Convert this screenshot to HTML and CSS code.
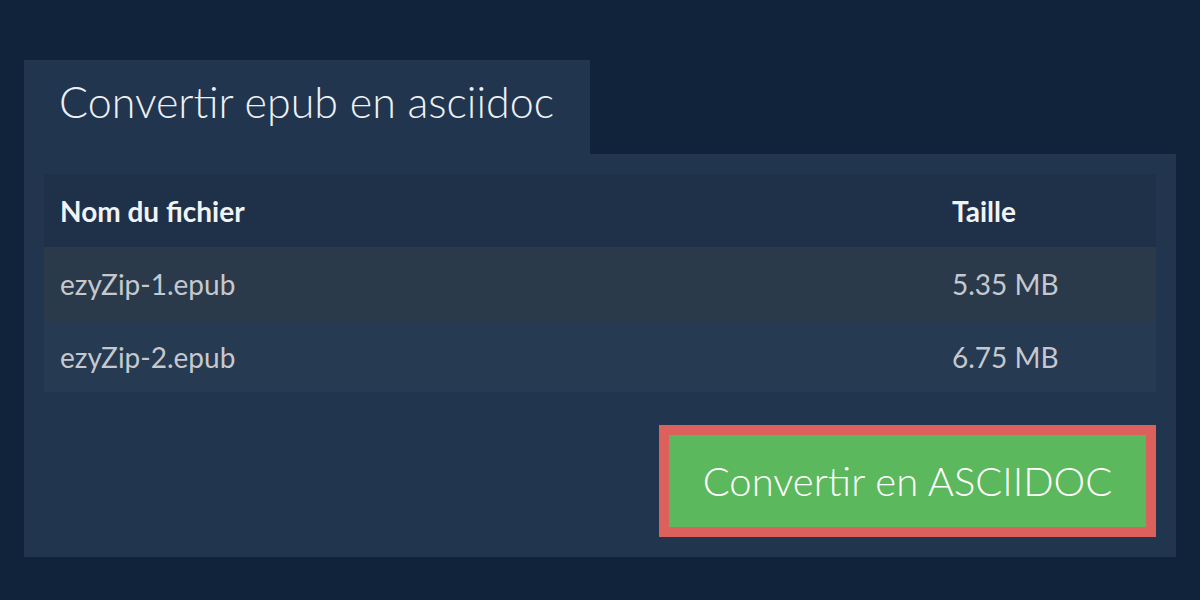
FILE: index.html
```html
<!DOCTYPE html>
<html lang="fr">
<head>
<meta charset="utf-8">
<title>Convertir epub en asciidoc</title>
<link rel="stylesheet" href="styles.css">
</head>
<body>
<main class="page">
  <div class="tab"><h1 class="title">Convertir epub en asciidoc</h1></div>
  <section class="panel">
    <table class="files">
      <thead>
        <tr class="head"><th class="col-name">Nom du fichier</th><th class="col-size">Taille</th></tr>
      </thead>
      <tbody>
        <tr class="row row-odd"><td>ezyZip-1.epub</td><td>5.35 MB</td></tr>
        <tr class="row row-even"><td>ezyZip-2.epub</td><td>6.75 MB</td></tr>
      </tbody>
    </table>
    <div class="actions">
      <button class="convert" type="button">Convertir en ASCIIDOC</button>
    </div>
  </section>
</main>
</body>
</html>
```

FILE: styles.css
```css
html, body {
  margin: 0;
  padding: 0;
  background: #10233a;
  font-family: Lato, "Liberation Sans", sans-serif;
}
.page {
  padding: 60px 24px 0 24px;
}
.tab {
  display: inline-block;
  background: #21354f;
  height: 94px;
  box-sizing: border-box;
  padding: 0 36px 0 35px;
}
.title {
  margin: 0;
  font-weight: 300;
  font-size: 43px;
  line-height: 84px;
  color: #eef0f3;
  white-space: nowrap;
}
.panel {
  background: #21354f;
  padding: 20px;
}
.files {
  width: 100%;
  border-collapse: collapse;
  font-size: 28px;
}
.files th {
  text-align: left;
  font-weight: 700;
  color: #f2f3f5;
  height: 73px;
  padding: 0 16px;
  background: #1f3149;
}
.col-size {
  width: 188px;
}
.files td {
  padding: 0 16px;
  color: #c5c9cf;
}
.row-odd td {
  height: 74px;
  background: #2b3a4b;
}
.row-even td {
  height: 71px;
  background: #263a52;
}
.actions {
  display: flex;
  justify-content: flex-end;
  margin-top: 33px;
}
.convert {
  width: 497px;
  height: 112px;
  background: #5cb85c;
  border: 10px solid #dc605c;
  color: #ffffff;
  font-family: Lato, "Liberation Sans", sans-serif;
  font-weight: 300;
  font-size: 40px;
  padding: 0;
}
```
